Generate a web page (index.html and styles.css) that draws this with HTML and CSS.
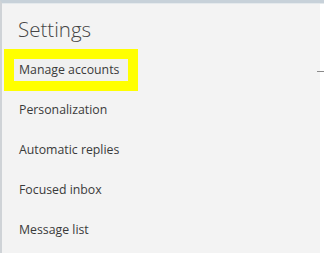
FILE: index.html
```html
<!DOCTYPE html>
<html>
<head>
<meta charset="utf-8">
<link rel="stylesheet" href="styles.css">
</head>
<body>
<div class="frame">
  <div class="panel">
    <div class="content">
      <h1 class="title">Settings</h1>
      <ul class="menu">
        <li class="item"><span class="label highlighted">Manage accounts</span></li>
        <li class="item"><span class="label">Personalization</span></li>
        <li class="item"><span class="label">Automatic replies</span></li>
        <li class="item"><span class="label">Focused inbox</span></li>
        <li class="item"><span class="label">Message list</span></li>
      </ul>
    </div>
    <div class="edge"><span class="tick"></span></div>
  </div>
</div>
</body>
</html>
```
FILE: styles.css
```css
html, body {
  margin: 0;
  padding: 0;
  width: 324px;
  height: 253px;
  overflow: hidden;
  background: #f3f3f3;
  font-family: "Open Sans", "Noto Sans", sans-serif;
}
.frame {
  width: 324px;
  height: 253px;
  box-sizing: border-box;
  border-top: 3px solid #c7d1d9;
  border-left: 2px solid #cfd3d7;
}
.panel {
  display: flex;
  height: 100%;
  background: #f3f3f3;
  border-top: 1px solid #e4e9ec;
}
.content {
  flex: 1;
}
.title {
  margin: 0;
  padding: 11px 0 0 16px;
  height: 46px;
  box-sizing: border-box;
  font-size: 20.5px;
  font-weight: 300;
  line-height: 28px;
  color: #454545;
}
.menu {
  list-style: none;
  margin: 0;
  padding: 0;
}
.item {
  height: 40px;
  display: flex;
  align-items: center;
  padding-left: 12px;
  font-size: 12.3px;
  color: #3a3a3a;
}
.label {
  display: inline-block;
  line-height: 22px;
  padding: 0 9px 0 5px;
}
.highlighted {
  background: #f0f0f0;
  outline: 10px solid #ffff00;
}
.edge {
  width: 4px;
  background: #ffffff;
  position: relative;
}
.tick {
  position: absolute;
  left: -3px;
  top: 67px;
  width: 7px;
  height: 1px;
  background: #8a8a8a;
}
```
